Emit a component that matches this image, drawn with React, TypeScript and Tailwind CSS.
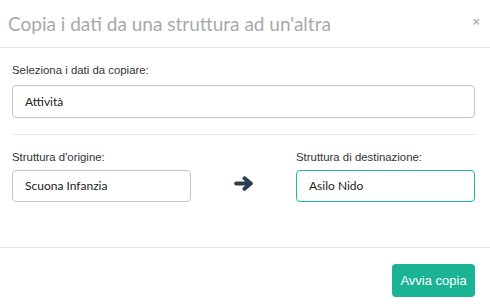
import React from "react";

export default function App() {
  return (
    <div className="w-[490px] h-[304px] bg-white flex flex-col overflow-hidden">
      <div className="h-[48px] flex items-center justify-between pl-[8px] pr-[10px] border-b border-[#e5e5e5]">
        <h4 className="text-[19px] leading-none text-[#a9a9a9] font-['Lato',sans-serif] font-normal">
          Copia i dati da una struttura ad un'altra
        </h4>
        <span className="text-[13px] leading-none text-[#b4b4b4] font-bold font-['Liberation_Sans',sans-serif] mb-[4px]">×</span>
      </div>
      <div className="pl-[12px] pr-[15px] pt-[15px] h-[200px] border-b border-[#e5e5e5] font-['Liberation_Sans',sans-serif]">
        <label className="block text-[11.4px] leading-[14px] text-[#333]">Seleziona i dati da copiare:</label>
        <div className="mt-[8px] h-[33px] border border-[#c4c4c4] rounded-[4px] flex items-center pl-[12px] text-[12px] text-[#222] font-['Lato',sans-serif]">
          Attività
        </div>
        <div className="mt-[16px] border-t border-[#e8e8e8]" />
        <div className="mt-[15px] flex items-start">
          <div className="w-[179px]">
            <label className="block text-[11.4px] leading-[14px] text-[#333]">Struttura d'origine:</label>
            <div className="mt-[6px] h-[32px] border border-[#c4c4c4] rounded-[4px] flex items-center pl-[12px] text-[12px] text-[#222] font-['Lato',sans-serif]">
              Scuona Infanzia
            </div>
          </div>
          <div className="flex-1 flex justify-center pt-[26px]">
            <svg width="20" height="15" viewBox="0 0 20 15">
              <path d="M2.2 7.5 H15.5 M10.5 2.3 L16.8 7.5 L10.5 12.7" stroke="#2c3e50" strokeWidth="4" fill="none" strokeLinecap="round" strokeLinejoin="round" />
            </svg>
          </div>
          <div className="w-[179px]">
            <label className="block text-[11.4px] leading-[14px] text-[#333]">Struttura di destinazione:</label>
            <div className="mt-[6px] h-[32px] border border-[#1abc9c] rounded-[4px] flex items-center pl-[12px] text-[12px] text-[#222] font-['Lato',sans-serif]">
              Asilo Nido
            </div>
          </div>
        </div>
      </div>
      <div className="flex justify-end pr-[15px] pt-[16px]">
        <button className="w-[83px] h-[33px] rounded-[4px] bg-[#1ab394] text-white text-[13px] font-['Liberation_Sans',sans-serif]">
          Avvia copia
        </button>
      </div>
    </div>
  );
}
